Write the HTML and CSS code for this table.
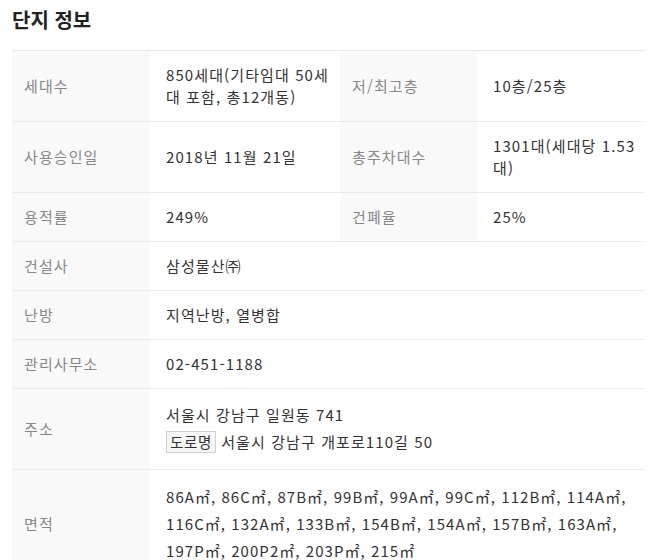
FILE: index.html
```html
<!DOCTYPE html>
<html lang="ko">
<head>
<meta charset="utf-8">
<link rel="stylesheet" href="styles.css">
</head>
<body>
<section class="panel">
  <h2 class="title">단지 정보</h2>
  <table class="info">
    <colgroup>
      <col class="c-th1"><col class="c-td1"><col class="c-th2"><col class="c-td2">
    </colgroup>
    <tbody>
      <tr>
        <th>세대수</th><td>850세대(기타임대 50세대 포함, 총12개동)</td>
        <th>저/최고층</th><td>10층/25층</td>
      </tr>
      <tr>
        <th>사용승인일</th><td>2018년 11월 21일</td>
        <th>총주차대수</th><td>1301대(세대당 1.53대)</td>
      </tr>
      <tr>
        <th>용적률</th><td>249%</td>
        <th>건폐율</th><td>25%</td>
      </tr>
      <tr><th>건설사</th><td colspan="3">삼성물산㈜</td></tr>
      <tr><th>난방</th><td colspan="3">지역난방, 열병합</td></tr>
      <tr><th>관리사무소</th><td colspan="3">02-451-1188</td></tr>
      <tr>
        <th>주소</th>
        <td colspan="3">
          <div class="addr">서울시 강남구 일원동 741</div>
          <div class="addr addr-road"><span class="badge">도로명</span> 서울시 강남구 개포로110길 50</div>
        </td>
      </tr>
      <tr>
        <th>면적</th>
        <td colspan="3" class="area"><span class="item">86A㎡,</span> <span class="item">86C㎡,</span> <span class="item">87B㎡,</span> <span class="item">99B㎡,</span> <span class="item">99A㎡,</span> <span class="item">99C㎡,</span> <span class="item">112B㎡,</span> <span class="item">114A㎡,</span> <span class="item">116C㎡,</span> <span class="item">132A㎡,</span> <span class="item">133B㎡,</span> <span class="item">154B㎡,</span> <span class="item">154A㎡,</span> <span class="item">157B㎡,</span> <span class="item">163A㎡,</span> <span class="item">197P㎡,</span> <span class="item">200P2㎡,</span> <span class="item">203P㎡,</span> <span class="item">215㎡</span></td>
      </tr>
    </tbody>
  </table>
</section>
</body>
</html>
```
FILE: styles.css
```css
html, body {
  margin: 0;
  background: #fff;
}
body {
  font-family: "Noto Sans CJK KR", "Noto Sans", sans-serif;
  color: #333;
}
.panel {
  padding: 0 8px 0 12px;
}
.title {
  margin: 0;
  padding-top: 6px;
  height: 50px;
  box-sizing: border-box;
  font-size: 20px;
  font-weight: 700;
  line-height: 28px;
  color: #222;
}
.info {
  width: 633px;
  border-collapse: collapse;
  table-layout: fixed;
  border-top: 1px solid #e8e8e8;
  font-size: 15px;
  line-height: 22px;
  letter-spacing: 1.1px;
}
.c-th1 { width: 138px; }
.c-td1 { width: 190px; }
.c-th2 { width: 137px; }
.c-td2 { width: 168px; }
.info th,
.info td {
  border-bottom: 1px solid #ebebeb;
  padding: 13px 2px 13px 16px;
  text-align: left;
  vertical-align: middle;
  word-break: break-all;
}
.info th {
  background: #f9f9f9;
  color: #888;
  font-weight: 400;
  padding-left: 12px;
}
.info td {
  color: #333;
}
.addr {
  line-height: 26px;
}
.addr-road {
  line-height: 28px;
}
.badge {
  display: inline-block;
  border: 1px solid #cfcfcf;
  background: #f6f6f6;
  line-height: 20px;
  padding: 0 3px;
  font-size: 14.5px;
  letter-spacing: 0.6px;
  color: #333;
}
.info .area {
  line-height: 27px;
  word-break: keep-all;
  letter-spacing: 1.05px;
}
.item {
  white-space: nowrap;
}
```
